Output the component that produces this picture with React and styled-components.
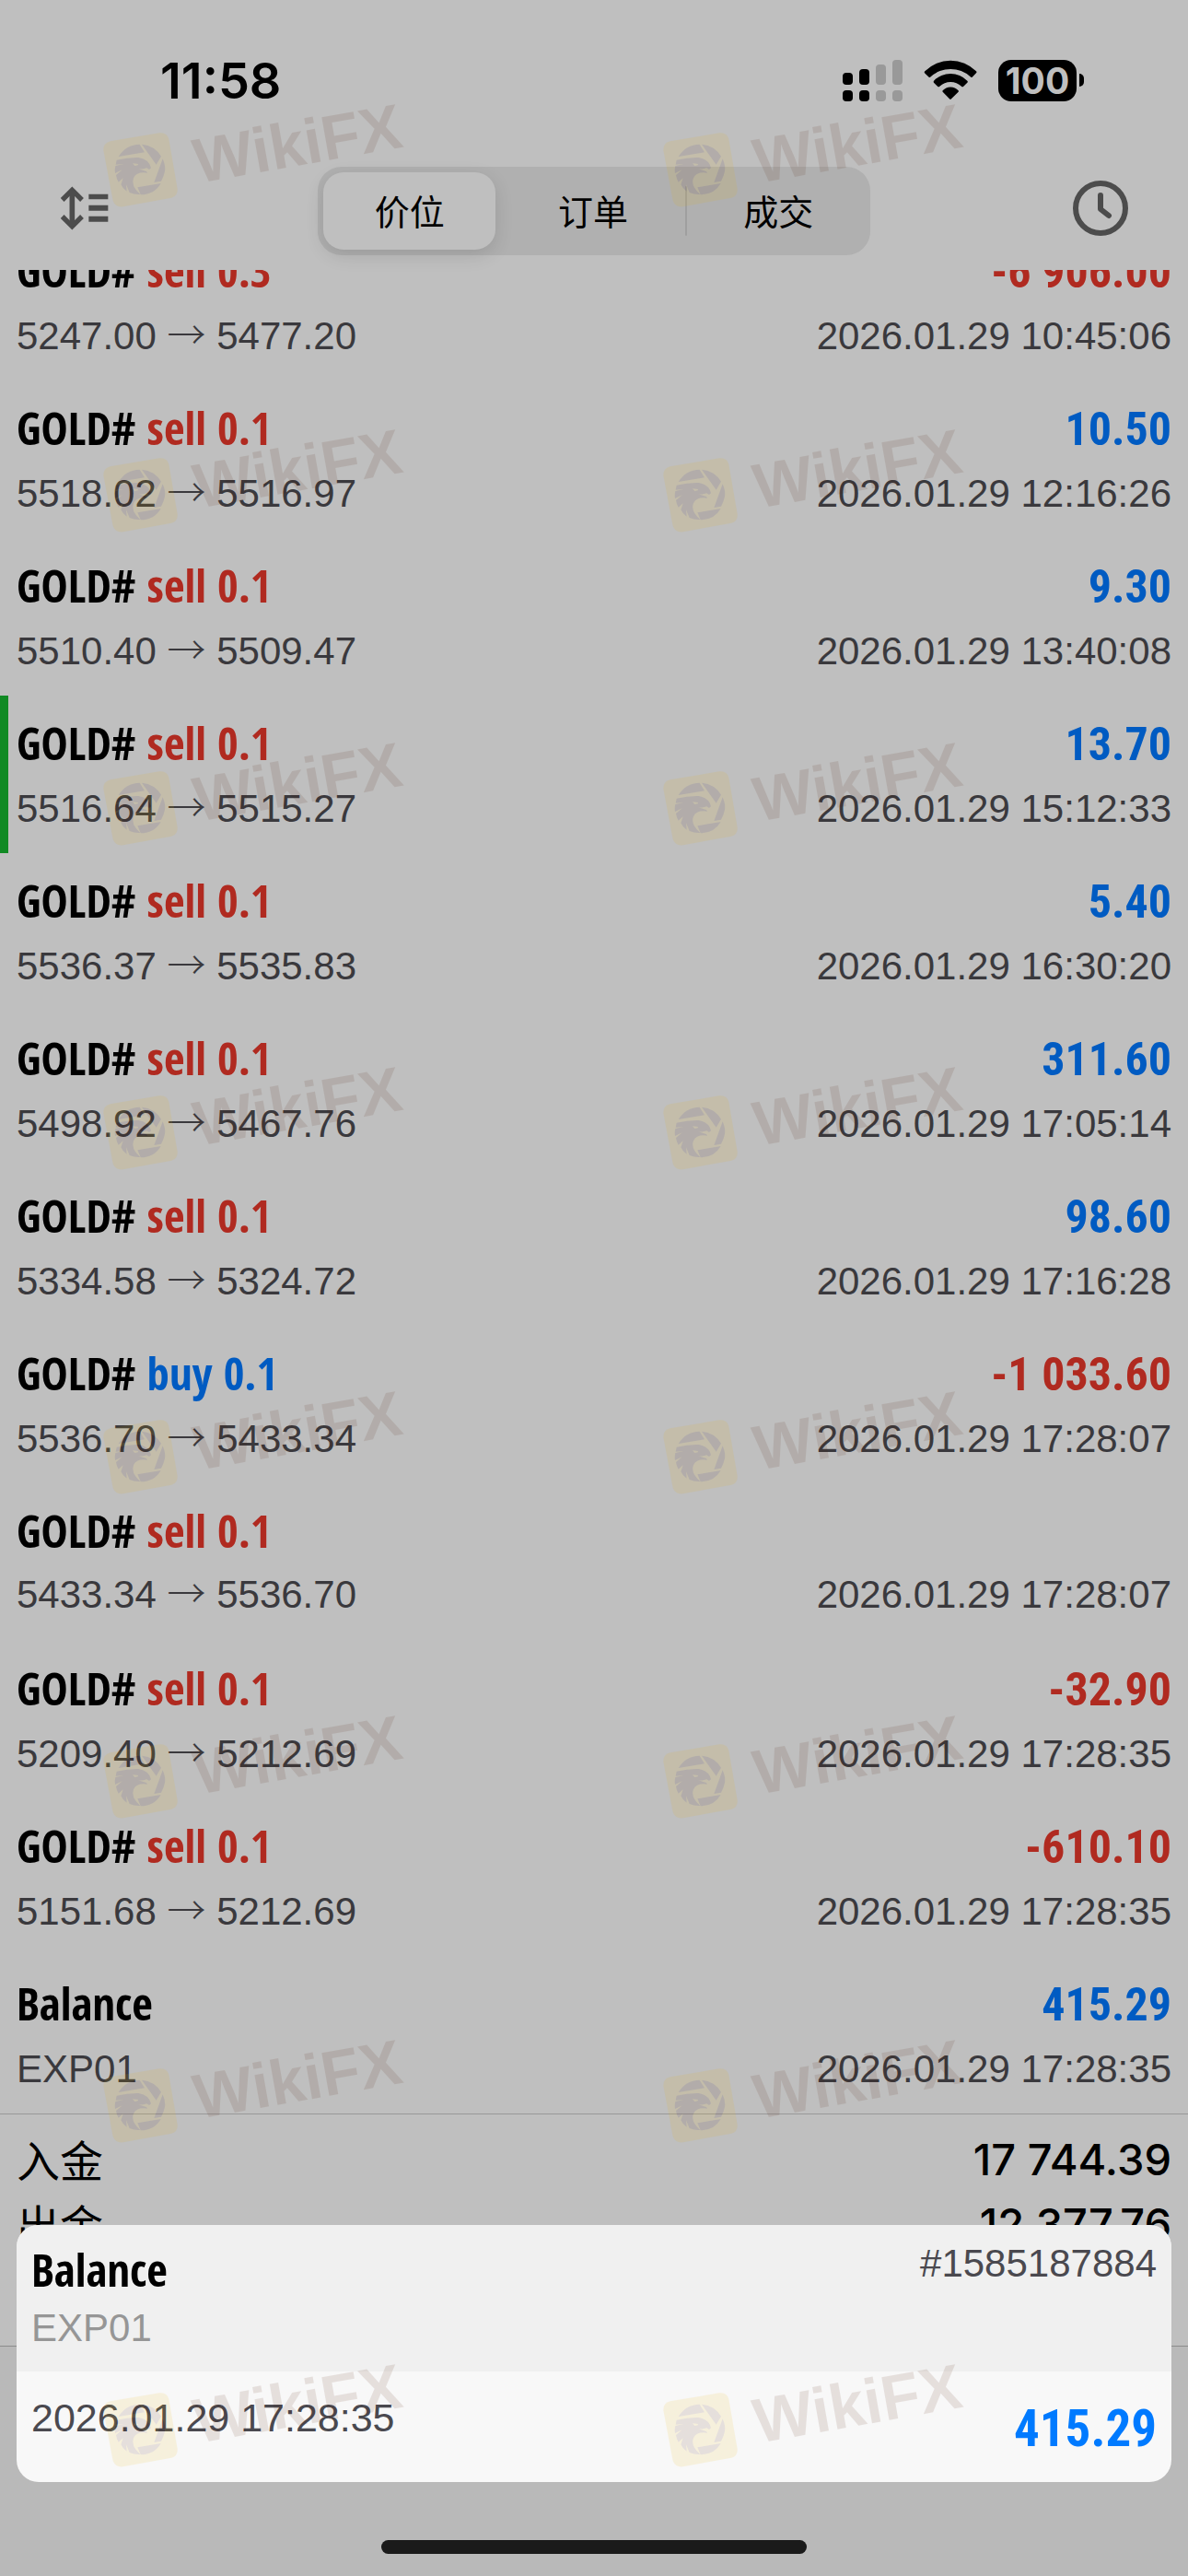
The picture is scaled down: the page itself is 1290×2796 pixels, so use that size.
import React from 'react';
import styled, { createGlobalStyle } from 'styled-components';

const GlobalStyle = createGlobalStyle`
  * {
    box-sizing: border-box;
  }

  body {
    margin: 0;
    background: #bfbfbf;
    font-family: 'Liberation Sans', 'Noto Sans CJK SC', sans-serif;
    color: #000;
  }

  button {
    padding: 0;
    border: 0;
    background: none;
    font: inherit;
    color: inherit;
  }
`;

const colors = {
  red: '#b02a20',
  blue: '#005bc2',
  detail: '#3a393d',
};

const deals = [
  { id: 1, side: 'sell', volume: '0.3', open: '5247.00', close: '5477.20', profit: '-6 906.00', time: '2026.01.29 10:45:06' },
  { id: 2, side: 'sell', volume: '0.1', open: '5518.02', close: '5516.97', profit: '10.50', time: '2026.01.29 12:16:26' },
  { id: 3, side: 'sell', volume: '0.1', open: '5510.40', close: '5509.47', profit: '9.30', time: '2026.01.29 13:40:08' },
  { id: 4, side: 'sell', volume: '0.1', open: '5516.64', close: '5515.27', profit: '13.70', time: '2026.01.29 15:12:33', marked: true },
  { id: 5, side: 'sell', volume: '0.1', open: '5536.37', close: '5535.83', profit: '5.40', time: '2026.01.29 16:30:20' },
  { id: 6, side: 'sell', volume: '0.1', open: '5498.92', close: '5467.76', profit: '311.60', time: '2026.01.29 17:05:14' },
  { id: 7, side: 'sell', volume: '0.1', open: '5334.58', close: '5324.72', profit: '98.60', time: '2026.01.29 17:16:28' },
  { id: 8, side: 'buy', volume: '0.1', open: '5536.70', close: '5433.34', profit: '-1 033.60', time: '2026.01.29 17:28:07' },
  { id: 9, side: 'sell', volume: '0.1', open: '5433.34', close: '5536.70', profit: '', time: '2026.01.29 17:28:07' },
  { id: 10, side: 'sell', volume: '0.1', open: '5209.40', close: '5212.69', profit: '-32.90', time: '2026.01.29 17:28:35' },
  { id: 11, side: 'sell', volume: '0.1', open: '5151.68', close: '5212.69', profit: '-610.10', time: '2026.01.29 17:28:35' },
  { id: 12, comment: 'EXP01', profit: '415.29', time: '2026.01.29 17:28:35' },
];

const Screen = styled.div`
  position: relative;
  display: flex;
  flex-direction: column;
  min-height: 100vh;
  overflow: hidden;
`;

const StatusBar = styled.header`
  display: flex;
  align-items: center;
  justify-content: space-between;
  height: 174px;
  padding: 0 113px 0 174px;
`;

const Time = styled.time`
  font: 600 54px Inter, sans-serif;
`;

const Indicators = styled.div`
  display: flex;
  align-items: center;
  gap: 23px;
`;

const Battery = styled.div`
  display: flex;
  align-items: center;
  gap: 3px;
`;

const Charge = styled.span`
  width: 85px;
  border-radius: 14px;
  background: #000;
  color: #bfbfbf;
  font: 700 39px/45px Inter, sans-serif;
  text-align: center;
`;

const BatteryTip = styled.span`
  width: 5px;
  height: 14px;
  border-radius: 0 5px 5px 0;
  background: #000;
`;

const Toolbar = styled.nav`
  display: grid;
  grid-template-columns: 1fr 600px 1fr;
  align-items: center;
  padding: 7px 65px 16px;
`;

const IconButton = styled.button`
  display: flex;
  justify-self: ${({ $end }) => ($end ? 'end' : 'start')};
  padding-bottom: 6px;
  color: #4c4c4c;
`;

const Segments = styled.div`
  display: flex;
  align-items: center;
  height: 96px;
  border-radius: 26px;
  background: #b0b0b0;
`;

const Segment = styled.button`
  flex: 1;
  height: 84px;
  margin: 0 6px;
  padding-bottom: 4px;
  border-radius: 22px;
  background: ${({ $active }) => ($active ? '#bfbfbf' : 'none')};
  box-shadow: ${({ $active }) => ($active ? '0 6px 20px rgba(0, 0, 0, 0.12)' : 'none')};
  font: 400 38px 'Noto Sans CJK SC', sans-serif;
`;

const Divider = styled.span`
  width: 2px;
  height: 54px;
  border-radius: 1px;
  background: #9f9f9f;
`;

const History = styled.main`
  overflow: hidden;
`;

const DealList = styled.ul`
  margin: -51px 0 0;
  padding: 0;
  list-style: none;
`;

const Deal = styled.li`
  height: 171px;
  padding: 21px 18px 0 9px;
  border-left: 9px solid ${({ $marked }) => ($marked ? '#118a24' : 'transparent')};
`;

const Line = styled.div`
  display: flex;
  align-items: baseline;
  justify-content: space-between;
`;

const Title = styled.span`
  font: 700 49px/60px 'Open Sans Condensed', 'Roboto Condensed', sans-serif;
`;

const Side = styled.span`
  color: ${({ $side }) => ($side === 'buy' ? colors.blue : colors.red)};
`;

const Profit = styled.span`
  font: 700 50px/60px 'Roboto Condensed', sans-serif;
  color: ${({ $loss }) => ($loss ? colors.red : colors.blue)};
`;

const Detail = styled.span`
  margin-top: 10px;
  font-size: 42px;
  line-height: 60px;
  color: ${colors.detail};
`;

const Arrow = styled.span`
  font: 300 42px/42px 'Noto Sans CJK SC', sans-serif;
`;

const Summary = styled.dl`
  min-height: 253px;
  margin: 0;
  padding: 14px 18px 0;
  border-top: 1px solid #999;
  border-bottom: 1px solid #8c8c8c;
`;

const SummaryRow = styled.div`
  display: flex;
  align-items: flex-start;
  justify-content: space-between;
  height: 70px;
`;

const SummaryLabel = styled.dt`
  font: 400 47px/68px 'Noto Sans CJK SC', sans-serif;
`;

const SummaryValue = styled.dd`
  margin: 0;
  font: 500 47px/70px Inter, sans-serif;
`;

const TabArea = styled.footer`
  flex: 1;
  background: #b9b9b9;
`;

const Card = styled.section`
  position: absolute;
  right: 18px;
  bottom: 102px;
  left: 18px;
  overflow: hidden;
  border-radius: 24px;
  background: #f8f8f8;
`;

const CardHead = styled.div`
  display: flex;
  justify-content: space-between;
  height: 159px;
  padding: 12px 16px 0;
  background: #f0f0f0;
`;

const CardBody = styled.div`
  display: flex;
  justify-content: space-between;
  height: 120px;
  padding: 20px 16px 0;
`;

const CardTitles = styled.div`
  display: flex;
  flex-direction: column;
  gap: 4px;
  padding-top: 6px;
`;

const CardText = styled.span`
  font-size: ${({ $large }) => ($large ? '43px' : '42px')};
  line-height: 60px;
  color: ${({ $muted }) => ($muted ? '#969696' : '#4a494f')};
`;

const CardProfit = styled.strong`
  padding-top: 12px;
  font: 700 55px/60px 'Roboto Condensed', sans-serif;
  color: #007aff;
`;

const HomeBar = styled.div`
  position: absolute;
  bottom: 24px;
  left: 50%;
  width: 462px;
  height: 15px;
  margin-left: -231px;
  border-radius: 8px;
  background: #1a1a1a;
`;

const Watermarks = styled.div`
  position: absolute;
  inset: 100px 0 0 100px;
  display: grid;
  grid-template-columns: 608px 360px;
  grid-template-rows: 353px 340px;
  grid-auto-rows: 352px;
  opacity: 0.105;
  pointer-events: none;
`;

const WatermarkText = styled.text`
  font: 700 206px 'Liberation Sans', sans-serif;
  fill: #501800;
`;

const Signal = () => (
  <svg width="65" height="45" viewBox="0 0 65 45" aria-hidden="true">
    <rect x="0" y="14" width="11" height="13" rx="4" />
    <rect x="18" y="10" width="11" height="17" rx="4" />
    <rect x="0" y="33" width="11" height="12" rx="4" />
    <rect x="18" y="33" width="11" height="12" rx="4" />
    <g fill="#999">
      <rect x="36" y="5" width="11" height="22" rx="4" />
      <rect x="54" y="0" width="11" height="27" rx="4" />
      <rect x="36" y="33" width="11" height="12" rx="4" />
      <rect x="54" y="33" width="11" height="12" rx="4" />
    </g>
  </svg>
);

const Wifi = () => (
  <svg width="58" height="44" viewBox="310 43 174 132" aria-hidden="true">
    <path d="M314 80A117 117 0 0 1 481 80Q484 83 481 86L468 99Q465 101 462 98A95 95 0 0 0 333 98Q330 101 327 99L313 86Q311 83 314 80Z" />
    <path d="M343 111A76 76 0 0 1 452 111Q455 114 452 117L439 130Q436 132 433 129A52 52 0 0 0 362 129Q359 132 356 130L343 117Q341 114 343 111Z" />
    <path d="M372 143A34 34 0 0 1 423 143Q425 145 423 147L400 170Q397 173 394 170L372 147Q370 145 372 143Z" />
  </svg>
);

const SortIcon = () => (
  <svg width="53" height="48" viewBox="53 67 159 144" aria-hidden="true">
    <g fill="none" stroke="currentColor" strokeWidth="16">
      <path d="M61 112L93 80L125 112M61 166L93 198L125 166" />
      <path d="M93 80V198" strokeWidth="17" />
    </g>
    <path d="M147 93H210V110H147ZM147 129H210V147H147ZM147 165H210V183H147Z" fill="currentColor" />
  </svg>
);

const ClockIcon = () => (
  <svg width="60" height="60" viewBox="0 0 60 60" fill="none" stroke="currentColor" aria-hidden="true">
    <circle cx="30" cy="30" r="27" strokeWidth="6" />
    <path d="M30 16V31L39 38" strokeWidth="6" strokeLinecap="round" strokeLinejoin="round" />
  </svg>
);

const Watermark = () => (
  <svg width="360" height="130" viewBox="0 0 1080 390">
    <path
      fill="#eeb500"
      d="M59 160L219 133Q244 130 250 153L278 315Q280 338 259 344L101 373Q77 376 68 354L37 190Q36 166 59 160Z"
    />
    <g fill="#501800">
      <path d="M86 210Q110 171 155 170L171 196Z" />
      <path d="M162 170Q204 174 225 209L209 236Z" />
      <path d="M230 217Q240 240 237 258Q234 274 225 290L202 294Z" />
      <path d="M148 310L224 297Q203 334 158 334Z" />
      <path d="M80 221Q118 212 152 213Q186 219 192 247L186 252L178 247Q164 252 150 250L177 258L180 263Q145 258 135 280Q125 305 157 333Q138 334 122 327L111 301L113 323Q100 315 94 301L101 280L86 293Q80 284 78 270L98 253L75 264Q73 250 76 240L103 234L77 236Z" />
    </g>
    <path d="M132 232L150 234L149 238L139 240Z" fill="#eeb500" />
    <WatermarkText x="344" y="297" transform="rotate(-10 344 297)">WikiFX</WatermarkText>
  </svg>
);

const DealRow = ({ deal }) => (
  <Deal $marked={deal.marked}>
    <Line>
      <Title>
        {deal.side ? (
          <>
            GOLD# <Side $side={deal.side}>{deal.side} {deal.volume}</Side>
          </>
        ) : (
          'Balance'
        )}
      </Title>
      <Profit $loss={deal.profit.startsWith('-')}>{deal.profit}</Profit>
    </Line>
    <Line>
      <Detail>
        {deal.comment || (
          <>
            {deal.open} <Arrow>→</Arrow> {deal.close}
          </>
        )}
      </Detail>
      <Detail>{deal.time}</Detail>
    </Line>
  </Deal>
);

const App = () => (
  <Screen>
    <GlobalStyle />
    <StatusBar>
      <Time>11:58</Time>
      <Indicators>
        <Signal />
        <Wifi />
        <Battery>
          <Charge>100</Charge>
          <BatteryTip />
        </Battery>
      </Indicators>
    </StatusBar>
    <Toolbar>
      <IconButton type="button" aria-label="Sort">
        <SortIcon />
      </IconButton>
      <Segments>
        <Segment type="button" $active>价位</Segment>
        <Segment type="button">订单</Segment>
        <Divider />
        <Segment type="button">成交</Segment>
      </Segments>
      <IconButton type="button" aria-label="Period" $end>
        <ClockIcon />
      </IconButton>
    </Toolbar>
    <History>
      <DealList>
        {deals.map(deal => (
          <DealRow key={deal.id} deal={deal} />
        ))}
      </DealList>
      <Summary>
        <SummaryRow>
          <SummaryLabel>入金</SummaryLabel>
          <SummaryValue>17 744.39</SummaryValue>
        </SummaryRow>
        <SummaryRow>
          <SummaryLabel>出金</SummaryLabel>
          <SummaryValue>12 377.76</SummaryValue>
        </SummaryRow>
      </Summary>
    </History>
    <TabArea />
    <Card>
      <CardHead>
        <CardTitles>
          <Title>Balance</Title>
          <CardText $muted>EXP01</CardText>
        </CardTitles>
        <CardText>#1585187884</CardText>
      </CardHead>
      <CardBody>
        <CardText $large>2026.01.29 17:28:35</CardText>
        <CardProfit>415.29</CardProfit>
      </CardBody>
    </Card>
    <HomeBar />
    <Watermarks aria-hidden="true">
      {Array.from({ length: 16 }, (_, i) => (
        <Watermark key={i} />
      ))}
    </Watermarks>
  </Screen>
);

export default App;
